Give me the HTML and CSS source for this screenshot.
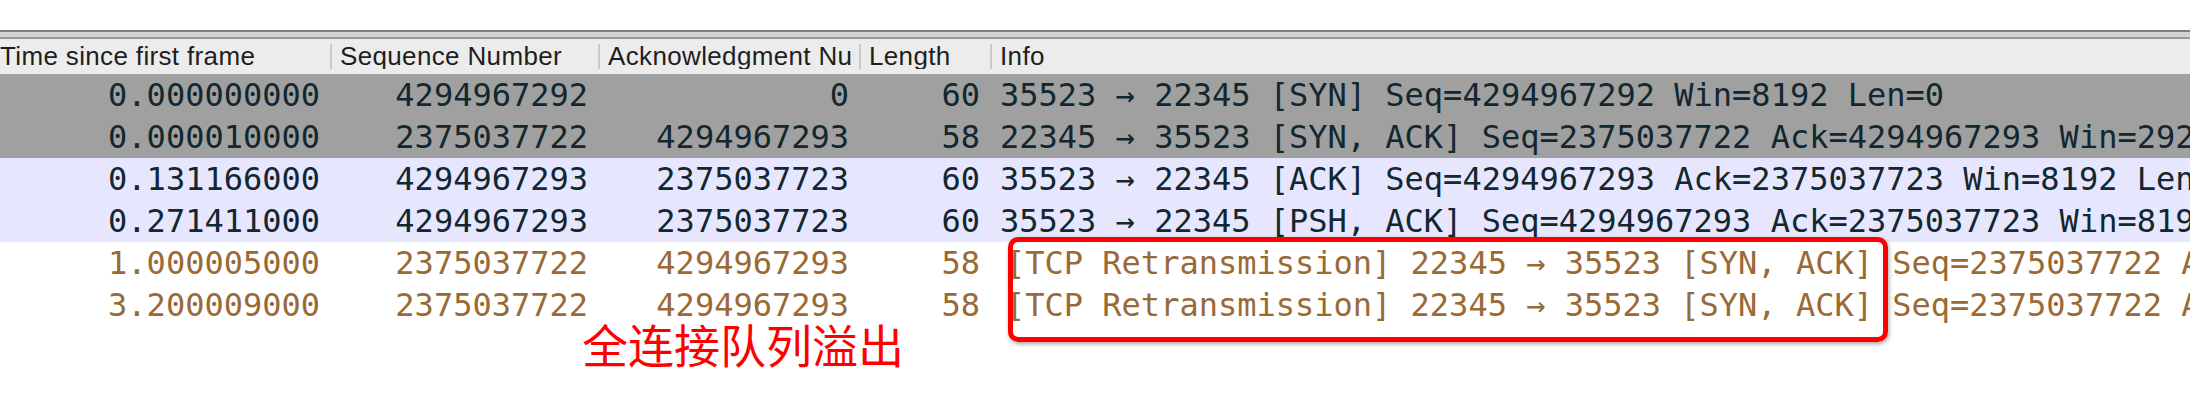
FILE: index.html
```html
<!DOCTYPE html>
<html lang="zh">
<head>
<meta charset="utf-8">
<title>Packet list</title>
<link rel="stylesheet" href="styles.css">
</head>
<body>
<div class="page">
  <div class="topgap"></div>
  <div class="frame"></div>
  <div class="hdr">
    <div class="hc first">Time since first frame</div>
    <div class="hc">Sequence Number</div>
    <div class="hc">Acknowledgment Number</div>
    <div class="hc">Length</div>
    <div class="hc">Info</div>
  </div>
  <div class="row syn">
    <div class="c">0.000000000</div>
    <div class="c">4294967292</div>
    <div class="c">0</div>
    <div class="c">60</div>
    <div class="c info">35523 → 22345 [SYN] Seq=4294967292 Win=8192 Len=0</div>
  </div>
  <div class="row syn">
    <div class="c">0.000010000</div>
    <div class="c">2375037722</div>
    <div class="c">4294967293</div>
    <div class="c">58</div>
    <div class="c info">22345 → 35523 [SYN, ACK] Seq=2375037722 Ack=4294967293 Win=29200 Len=0 MSS=1460</div>
  </div>
  <div class="row tcp">
    <div class="c">0.131166000</div>
    <div class="c">4294967293</div>
    <div class="c">2375037723</div>
    <div class="c">60</div>
    <div class="c info">35523 → 22345 [ACK] Seq=4294967293 Ack=2375037723 Win=8192 Len=0</div>
  </div>
  <div class="row tcp">
    <div class="c">0.271411000</div>
    <div class="c">4294967293</div>
    <div class="c">2375037723</div>
    <div class="c">60</div>
    <div class="c info">35523 → 22345 [PSH, ACK] Seq=4294967293 Ack=2375037723 Win=8192 Len=6</div>
  </div>
  <div class="row retx">
    <div class="c">1.000005000</div>
    <div class="c">2375037722</div>
    <div class="c">4294967293</div>
    <div class="c">58</div>
    <div class="c info">[TCP Retransmission] 22345 → 35523 [SYN, ACK] Seq=2375037722 Ack=4294967293 Win=29200 Len=0</div>
  </div>
  <div class="row retx">
    <div class="c">3.200009000</div>
    <div class="c">2375037722</div>
    <div class="c">4294967293</div>
    <div class="c">58</div>
    <div class="c info">[TCP Retransmission] 22345 → 35523 [SYN, ACK] Seq=2375037722 Ack=4294967293 Win=29200 Len=0</div>
  </div>
  <div class="note">全连接队列溢出</div>
  <div class="box"></div>
</div>
</body>
</html>
```
FILE: styles.css
```css
html, body {
  margin: 0;
  padding: 0;
  background: #ffffff;
}
body {
  width: 2190px;
  height: 414px;
  overflow: hidden;
}
.page {
  position: relative;
  width: 2190px;
  height: 414px;
  overflow: hidden;
  background: #ffffff;
}
.topgap {
  height: 30px;
}
.frame {
  height: 5px;
  background: #d3d3d3;
  border-top: 2px solid #7f7f7f;
  border-bottom: 2px solid #9a9a9a;
}
.hdr {
  display: grid;
  grid-template-columns: 330px 268px 261px 131px 1fr;
  height: 35px;
  align-items: center;
  background: #ececec;
  font-family: "Liberation Sans", Arial, sans-serif;
  font-size: 26px;
  letter-spacing: 0.35px;
  color: #1e1e1e;
}
.hc {
  height: 25px;
  line-height: 25px;
  padding-left: 8px;
  margin-right: 5px;
  border-left: 2px solid #c9c9c9;
  white-space: nowrap;
  overflow: hidden;
}
.hc.first {
  padding-left: 0;
  border-left: none;
}
.row {
  display: grid;
  grid-template-columns: 330px 268px 261px 131px 1fr;
  height: 42px;
  align-items: center;
  font-family: "DejaVu Sans Mono", "Liberation Mono", monospace;
  font-size: 32px;
  line-height: 42px;
  color: #12272e;
}
.row.syn {
  background: #a0a0a0;
}
.row.tcp {
  background: #e7e6ff;
}
.row.retx {
  background: #ffffff;
  color: #9a6a36;
}
.c {
  text-align: right;
  padding-right: 10px;
  white-space: pre;
  overflow: hidden;
}
.c.info {
  text-align: left;
  padding-right: 0;
  padding-left: 10px;
}
.row.retx .c.info {
  padding-left: 16px;
}
.note {
  position: absolute;
  left: 582px;
  top: 320px;
  font-family: "Noto Sans CJK SC", sans-serif;
  font-size: 46px;
  line-height: 46px;
  color: #ff0000;
  white-space: nowrap;
}
.box {
  position: absolute;
  left: 1008px;
  top: 237px;
  width: 880px;
  height: 105px;
  box-sizing: border-box;
  border: 5px solid #ff0000;
  border-radius: 10px;
  box-shadow: 1px 2px 4px rgba(0, 0, 0, 0.35);
}
```
